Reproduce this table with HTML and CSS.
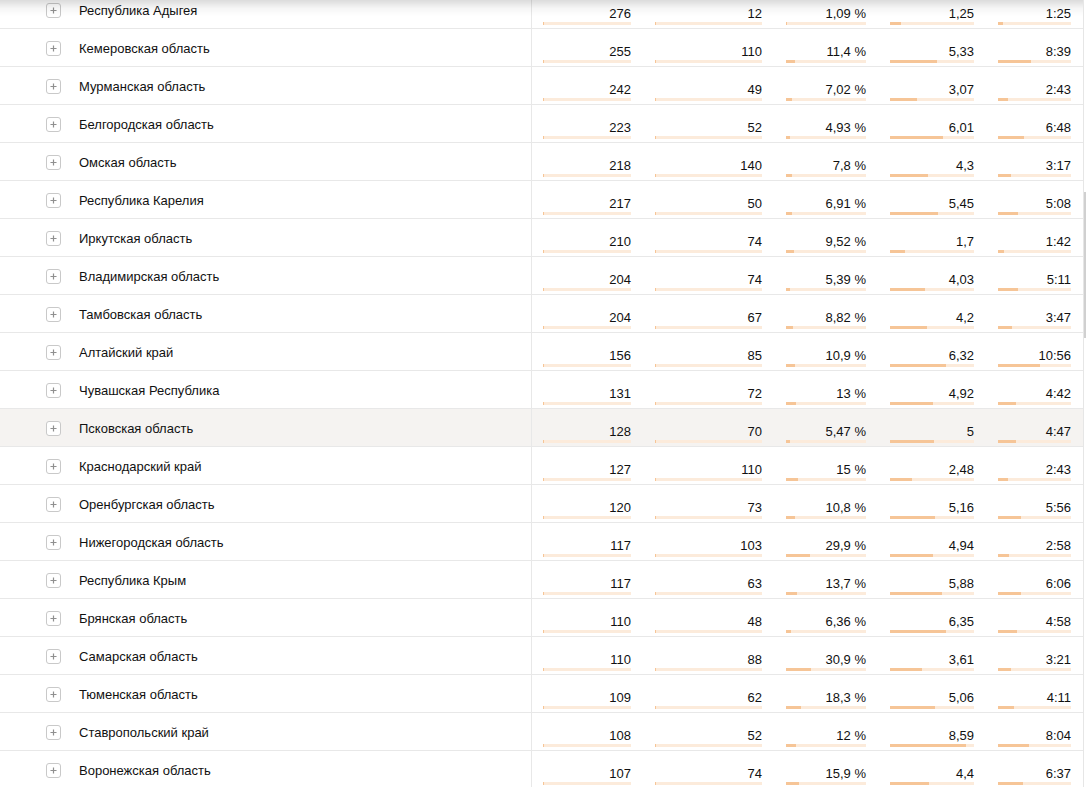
FILE: index.html
```html
<!DOCTYPE html>
<html lang="ru">
<head>
<meta charset="utf-8">
<title>Регионы</title>
<link rel="stylesheet" href="styles.css">
</head>
<body>
<div class="top-shadow"></div>
<div class="scroll-thumb"></div>
<div class="table">
  <div class="row">
    <div class="name"><span class="expand"><svg viewBox="0 0 15 15" width="15" height="15"><path d="M7.5 4v7M4 7.5h7"/></svg></span><span class="label">Республика Адыгея</span></div>
    <div class="cell"><span class="num">276</span><span class="bar"><span class="fill tick"></span></span></div>
    <div class="cell"><span class="num">12</span><span class="bar"><span class="fill tick"></span></span></div>
    <div class="cell"><span class="num">1,09 %</span><span class="bar"><span class="fill" style="width:1.09%"></span></span></div>
    <div class="cell"><span class="num">1,25</span><span class="bar"><span class="fill" style="width:13.1%"></span></span></div>
    <div class="cell"><span class="num">1:25</span><span class="bar"><span class="fill" style="width:7.4%"></span></span></div>
  </div>
  <div class="row">
    <div class="name"><span class="expand"><svg viewBox="0 0 15 15" width="15" height="15"><path d="M7.5 4v7M4 7.5h7"/></svg></span><span class="label">Кемеровская область</span></div>
    <div class="cell"><span class="num">255</span><span class="bar"><span class="fill tick"></span></span></div>
    <div class="cell"><span class="num">110</span><span class="bar"><span class="fill tick"></span></span></div>
    <div class="cell"><span class="num">11,4 %</span><span class="bar"><span class="fill" style="width:11.4%"></span></span></div>
    <div class="cell"><span class="num">5,33</span><span class="bar"><span class="fill" style="width:55.8%"></span></span></div>
    <div class="cell"><span class="num">8:39</span><span class="bar"><span class="fill" style="width:45.2%"></span></span></div>
  </div>
  <div class="row">
    <div class="name"><span class="expand"><svg viewBox="0 0 15 15" width="15" height="15"><path d="M7.5 4v7M4 7.5h7"/></svg></span><span class="label">Мурманская область</span></div>
    <div class="cell"><span class="num">242</span><span class="bar"><span class="fill tick"></span></span></div>
    <div class="cell"><span class="num">49</span><span class="bar"><span class="fill tick"></span></span></div>
    <div class="cell"><span class="num">7,02 %</span><span class="bar"><span class="fill" style="width:7.02%"></span></span></div>
    <div class="cell"><span class="num">3,07</span><span class="bar"><span class="fill" style="width:32.1%"></span></span></div>
    <div class="cell"><span class="num">2:43</span><span class="bar"><span class="fill" style="width:14.2%"></span></span></div>
  </div>
  <div class="row">
    <div class="name"><span class="expand"><svg viewBox="0 0 15 15" width="15" height="15"><path d="M7.5 4v7M4 7.5h7"/></svg></span><span class="label">Белгородская область</span></div>
    <div class="cell"><span class="num">223</span><span class="bar"><span class="fill tick"></span></span></div>
    <div class="cell"><span class="num">52</span><span class="bar"><span class="fill tick"></span></span></div>
    <div class="cell"><span class="num">4,93 %</span><span class="bar"><span class="fill" style="width:4.93%"></span></span></div>
    <div class="cell"><span class="num">6,01</span><span class="bar"><span class="fill" style="width:62.9%"></span></span></div>
    <div class="cell"><span class="num">6:48</span><span class="bar"><span class="fill" style="width:35.5%"></span></span></div>
  </div>
  <div class="row">
    <div class="name"><span class="expand"><svg viewBox="0 0 15 15" width="15" height="15"><path d="M7.5 4v7M4 7.5h7"/></svg></span><span class="label">Омская область</span></div>
    <div class="cell"><span class="num">218</span><span class="bar"><span class="fill tick"></span></span></div>
    <div class="cell"><span class="num">140</span><span class="bar"><span class="fill tick"></span></span></div>
    <div class="cell"><span class="num">7,8 %</span><span class="bar"><span class="fill" style="width:7.8%"></span></span></div>
    <div class="cell"><span class="num">4,3</span><span class="bar"><span class="fill" style="width:45%"></span></span></div>
    <div class="cell"><span class="num">3:17</span><span class="bar"><span class="fill" style="width:17.2%"></span></span></div>
  </div>
  <div class="row">
    <div class="name"><span class="expand"><svg viewBox="0 0 15 15" width="15" height="15"><path d="M7.5 4v7M4 7.5h7"/></svg></span><span class="label">Республика Карелия</span></div>
    <div class="cell"><span class="num">217</span><span class="bar"><span class="fill tick"></span></span></div>
    <div class="cell"><span class="num">50</span><span class="bar"><span class="fill tick"></span></span></div>
    <div class="cell"><span class="num">6,91 %</span><span class="bar"><span class="fill" style="width:6.91%"></span></span></div>
    <div class="cell"><span class="num">5,45</span><span class="bar"><span class="fill" style="width:57.1%"></span></span></div>
    <div class="cell"><span class="num">5:08</span><span class="bar"><span class="fill" style="width:26.8%"></span></span></div>
  </div>
  <div class="row">
    <div class="name"><span class="expand"><svg viewBox="0 0 15 15" width="15" height="15"><path d="M7.5 4v7M4 7.5h7"/></svg></span><span class="label">Иркутская область</span></div>
    <div class="cell"><span class="num">210</span><span class="bar"><span class="fill tick"></span></span></div>
    <div class="cell"><span class="num">74</span><span class="bar"><span class="fill tick"></span></span></div>
    <div class="cell"><span class="num">9,52 %</span><span class="bar"><span class="fill" style="width:9.52%"></span></span></div>
    <div class="cell"><span class="num">1,7</span><span class="bar"><span class="fill" style="width:17.8%"></span></span></div>
    <div class="cell"><span class="num">1:42</span><span class="bar"><span class="fill" style="width:8.9%"></span></span></div>
  </div>
  <div class="row">
    <div class="name"><span class="expand"><svg viewBox="0 0 15 15" width="15" height="15"><path d="M7.5 4v7M4 7.5h7"/></svg></span><span class="label">Владимирская область</span></div>
    <div class="cell"><span class="num">204</span><span class="bar"><span class="fill tick"></span></span></div>
    <div class="cell"><span class="num">74</span><span class="bar"><span class="fill tick"></span></span></div>
    <div class="cell"><span class="num">5,39 %</span><span class="bar"><span class="fill" style="width:5.39%"></span></span></div>
    <div class="cell"><span class="num">4,03</span><span class="bar"><span class="fill" style="width:42.2%"></span></span></div>
    <div class="cell"><span class="num">5:11</span><span class="bar"><span class="fill" style="width:27.1%"></span></span></div>
  </div>
  <div class="row">
    <div class="name"><span class="expand"><svg viewBox="0 0 15 15" width="15" height="15"><path d="M7.5 4v7M4 7.5h7"/></svg></span><span class="label">Тамбовская область</span></div>
    <div class="cell"><span class="num">204</span><span class="bar"><span class="fill tick"></span></span></div>
    <div class="cell"><span class="num">67</span><span class="bar"><span class="fill tick"></span></span></div>
    <div class="cell"><span class="num">8,82 %</span><span class="bar"><span class="fill" style="width:8.82%"></span></span></div>
    <div class="cell"><span class="num">4,2</span><span class="bar"><span class="fill" style="width:44%"></span></span></div>
    <div class="cell"><span class="num">3:47</span><span class="bar"><span class="fill" style="width:19.8%"></span></span></div>
  </div>
  <div class="row">
    <div class="name"><span class="expand"><svg viewBox="0 0 15 15" width="15" height="15"><path d="M7.5 4v7M4 7.5h7"/></svg></span><span class="label">Алтайский край</span></div>
    <div class="cell"><span class="num">156</span><span class="bar"><span class="fill tick"></span></span></div>
    <div class="cell"><span class="num">85</span><span class="bar"><span class="fill tick"></span></span></div>
    <div class="cell"><span class="num">10,9 %</span><span class="bar"><span class="fill" style="width:10.9%"></span></span></div>
    <div class="cell"><span class="num">6,32</span><span class="bar"><span class="fill" style="width:66.2%"></span></span></div>
    <div class="cell"><span class="num">10:56</span><span class="bar"><span class="fill" style="width:57.1%"></span></span></div>
  </div>
  <div class="row">
    <div class="name"><span class="expand"><svg viewBox="0 0 15 15" width="15" height="15"><path d="M7.5 4v7M4 7.5h7"/></svg></span><span class="label">Чувашская Республика</span></div>
    <div class="cell"><span class="num">131</span><span class="bar"><span class="fill tick"></span></span></div>
    <div class="cell"><span class="num">72</span><span class="bar"><span class="fill tick"></span></span></div>
    <div class="cell"><span class="num">13 %</span><span class="bar"><span class="fill" style="width:13%"></span></span></div>
    <div class="cell"><span class="num">4,92</span><span class="bar"><span class="fill" style="width:51.5%"></span></span></div>
    <div class="cell"><span class="num">4:42</span><span class="bar"><span class="fill" style="width:24.6%"></span></span></div>
  </div>
  <div class="row hover">
    <div class="name"><span class="expand"><svg viewBox="0 0 15 15" width="15" height="15"><path d="M7.5 4v7M4 7.5h7"/></svg></span><span class="label">Псковская область</span></div>
    <div class="cell"><span class="num">128</span><span class="bar"><span class="fill tick"></span></span></div>
    <div class="cell"><span class="num">70</span><span class="bar"><span class="fill tick"></span></span></div>
    <div class="cell"><span class="num">5,47 %</span><span class="bar"><span class="fill" style="width:5.47%"></span></span></div>
    <div class="cell"><span class="num">5</span><span class="bar"><span class="fill" style="width:52.4%"></span></span></div>
    <div class="cell"><span class="num">4:47</span><span class="bar"><span class="fill" style="width:25%"></span></span></div>
  </div>
  <div class="row">
    <div class="name"><span class="expand"><svg viewBox="0 0 15 15" width="15" height="15"><path d="M7.5 4v7M4 7.5h7"/></svg></span><span class="label">Краснодарский край</span></div>
    <div class="cell"><span class="num">127</span><span class="bar"><span class="fill tick"></span></span></div>
    <div class="cell"><span class="num">110</span><span class="bar"><span class="fill tick"></span></span></div>
    <div class="cell"><span class="num">15 %</span><span class="bar"><span class="fill" style="width:15%"></span></span></div>
    <div class="cell"><span class="num">2,48</span><span class="bar"><span class="fill" style="width:26%"></span></span></div>
    <div class="cell"><span class="num">2:43</span><span class="bar"><span class="fill" style="width:14.2%"></span></span></div>
  </div>
  <div class="row">
    <div class="name"><span class="expand"><svg viewBox="0 0 15 15" width="15" height="15"><path d="M7.5 4v7M4 7.5h7"/></svg></span><span class="label">Оренбургская область</span></div>
    <div class="cell"><span class="num">120</span><span class="bar"><span class="fill tick"></span></span></div>
    <div class="cell"><span class="num">73</span><span class="bar"><span class="fill tick"></span></span></div>
    <div class="cell"><span class="num">10,8 %</span><span class="bar"><span class="fill" style="width:10.8%"></span></span></div>
    <div class="cell"><span class="num">5,16</span><span class="bar"><span class="fill" style="width:54%"></span></span></div>
    <div class="cell"><span class="num">5:56</span><span class="bar"><span class="fill" style="width:31%"></span></span></div>
  </div>
  <div class="row">
    <div class="name"><span class="expand"><svg viewBox="0 0 15 15" width="15" height="15"><path d="M7.5 4v7M4 7.5h7"/></svg></span><span class="label">Нижегородская область</span></div>
    <div class="cell"><span class="num">117</span><span class="bar"><span class="fill tick"></span></span></div>
    <div class="cell"><span class="num">103</span><span class="bar"><span class="fill tick"></span></span></div>
    <div class="cell"><span class="num">29,9 %</span><span class="bar"><span class="fill" style="width:29.9%"></span></span></div>
    <div class="cell"><span class="num">4,94</span><span class="bar"><span class="fill" style="width:51.7%"></span></span></div>
    <div class="cell"><span class="num">2:58</span><span class="bar"><span class="fill" style="width:15.5%"></span></span></div>
  </div>
  <div class="row">
    <div class="name"><span class="expand"><svg viewBox="0 0 15 15" width="15" height="15"><path d="M7.5 4v7M4 7.5h7"/></svg></span><span class="label">Республика Крым</span></div>
    <div class="cell"><span class="num">117</span><span class="bar"><span class="fill tick"></span></span></div>
    <div class="cell"><span class="num">63</span><span class="bar"><span class="fill tick"></span></span></div>
    <div class="cell"><span class="num">13,7 %</span><span class="bar"><span class="fill" style="width:13.7%"></span></span></div>
    <div class="cell"><span class="num">5,88</span><span class="bar"><span class="fill" style="width:61.6%"></span></span></div>
    <div class="cell"><span class="num">6:06</span><span class="bar"><span class="fill" style="width:31.9%"></span></span></div>
  </div>
  <div class="row">
    <div class="name"><span class="expand"><svg viewBox="0 0 15 15" width="15" height="15"><path d="M7.5 4v7M4 7.5h7"/></svg></span><span class="label">Брянская область</span></div>
    <div class="cell"><span class="num">110</span><span class="bar"><span class="fill tick"></span></span></div>
    <div class="cell"><span class="num">48</span><span class="bar"><span class="fill tick"></span></span></div>
    <div class="cell"><span class="num">6,36 %</span><span class="bar"><span class="fill" style="width:6.36%"></span></span></div>
    <div class="cell"><span class="num">6,35</span><span class="bar"><span class="fill" style="width:66.5%"></span></span></div>
    <div class="cell"><span class="num">4:58</span><span class="bar"><span class="fill" style="width:26%"></span></span></div>
  </div>
  <div class="row">
    <div class="name"><span class="expand"><svg viewBox="0 0 15 15" width="15" height="15"><path d="M7.5 4v7M4 7.5h7"/></svg></span><span class="label">Самарская область</span></div>
    <div class="cell"><span class="num">110</span><span class="bar"><span class="fill tick"></span></span></div>
    <div class="cell"><span class="num">88</span><span class="bar"><span class="fill tick"></span></span></div>
    <div class="cell"><span class="num">30,9 %</span><span class="bar"><span class="fill" style="width:30.9%"></span></span></div>
    <div class="cell"><span class="num">3,61</span><span class="bar"><span class="fill" style="width:37.8%"></span></span></div>
    <div class="cell"><span class="num">3:21</span><span class="bar"><span class="fill" style="width:17.5%"></span></span></div>
  </div>
  <div class="row">
    <div class="name"><span class="expand"><svg viewBox="0 0 15 15" width="15" height="15"><path d="M7.5 4v7M4 7.5h7"/></svg></span><span class="label">Тюменская область</span></div>
    <div class="cell"><span class="num">109</span><span class="bar"><span class="fill tick"></span></span></div>
    <div class="cell"><span class="num">62</span><span class="bar"><span class="fill tick"></span></span></div>
    <div class="cell"><span class="num">18,3 %</span><span class="bar"><span class="fill" style="width:18.3%"></span></span></div>
    <div class="cell"><span class="num">5,06</span><span class="bar"><span class="fill" style="width:53%"></span></span></div>
    <div class="cell"><span class="num">4:11</span><span class="bar"><span class="fill" style="width:21.9%"></span></span></div>
  </div>
  <div class="row">
    <div class="name"><span class="expand"><svg viewBox="0 0 15 15" width="15" height="15"><path d="M7.5 4v7M4 7.5h7"/></svg></span><span class="label">Ставропольский край</span></div>
    <div class="cell"><span class="num">108</span><span class="bar"><span class="fill tick"></span></span></div>
    <div class="cell"><span class="num">52</span><span class="bar"><span class="fill tick"></span></span></div>
    <div class="cell"><span class="num">12 %</span><span class="bar"><span class="fill" style="width:12%"></span></span></div>
    <div class="cell"><span class="num">8,59</span><span class="bar"><span class="fill" style="width:89.9%"></span></span></div>
    <div class="cell"><span class="num">8:04</span><span class="bar"><span class="fill" style="width:42.2%"></span></span></div>
  </div>
  <div class="row">
    <div class="name"><span class="expand"><svg viewBox="0 0 15 15" width="15" height="15"><path d="M7.5 4v7M4 7.5h7"/></svg></span><span class="label">Воронежская область</span></div>
    <div class="cell"><span class="num">107</span><span class="bar"><span class="fill tick"></span></span></div>
    <div class="cell"><span class="num">74</span><span class="bar"><span class="fill tick"></span></span></div>
    <div class="cell"><span class="num">15,9 %</span><span class="bar"><span class="fill" style="width:15.9%"></span></span></div>
    <div class="cell"><span class="num">4,4</span><span class="bar"><span class="fill" style="width:46.1%"></span></span></div>
    <div class="cell"><span class="num">6:37</span><span class="bar"><span class="fill" style="width:34.6%"></span></span></div>
  </div>
</div>
</body>
</html>
```
FILE: styles.css
```css
html, body {
  margin: 0;
  padding: 0;
  overflow: hidden;
  background: #fff;
}
body {
  font-family: "Liberation Sans", Arial, sans-serif;
  font-size: 13px;
  color: #111;
}
.top-shadow {
  position: fixed;
  left: 0;
  top: 0;
  width: 1083px;
  height: 16px;
  background: linear-gradient(to bottom, rgba(0,0,0,0.14), rgba(0,0,0,0.04) 50%, rgba(0,0,0,0));
  pointer-events: none;
  z-index: 2;
}
.scroll-thumb {
  position: fixed;
  left: 1084px;
  top: 192px;
  width: 2px;
  height: 146px;
  background: #d0d0d0;
  z-index: 2;
}
.table {
  width: 1084px;
  margin-top: -9px;
  box-sizing: border-box;
  border-right: 1px solid #e6e6e6;
}
.row {
  display: grid;
  grid-template-columns: 532px 111px 131px 104px 108px 97px;
  height: 38px;
  box-sizing: border-box;
  border-bottom: 1px solid #e8e8e8;
  background: #fff;
}
.row.hover {
  background: #f5f3f1;
}
.name {
  display: flex;
  align-items: center;
  box-sizing: border-box;
  border-right: 1px solid #e8e8e8;
  padding: 2px 0 0 46px;
}
.expand {
  display: flex;
  width: 15px;
  height: 15px;
  margin-right: 18px;
}
.expand svg {
  display: block;
  box-sizing: border-box;
  border: 1px solid #c9c9c9;
  border-radius: 3px;
  background: #fff;
}
.expand path {
  stroke: #8f8f8f;
  stroke-width: 1.4;
  fill: none;
}
.label {
  white-space: nowrap;
  line-height: 16px;
}
.cell {
  display: flex;
  flex-direction: column;
  justify-content: flex-end;
  padding: 0 12px 3px 12px;
}
.cell:nth-child(2) {
  padding-left: 11px;
}
.num {
  text-align: right;
  line-height: 16px;
  white-space: nowrap;
}
.bar {
  display: block;
  height: 3px;
  background: #fcebdb;
  position: relative;
  overflow: hidden;
}
.fill {
  display: block;
  height: 100%;
  background: #f6c597;
}
.fill.tick {
  width: 1px;
}
```
